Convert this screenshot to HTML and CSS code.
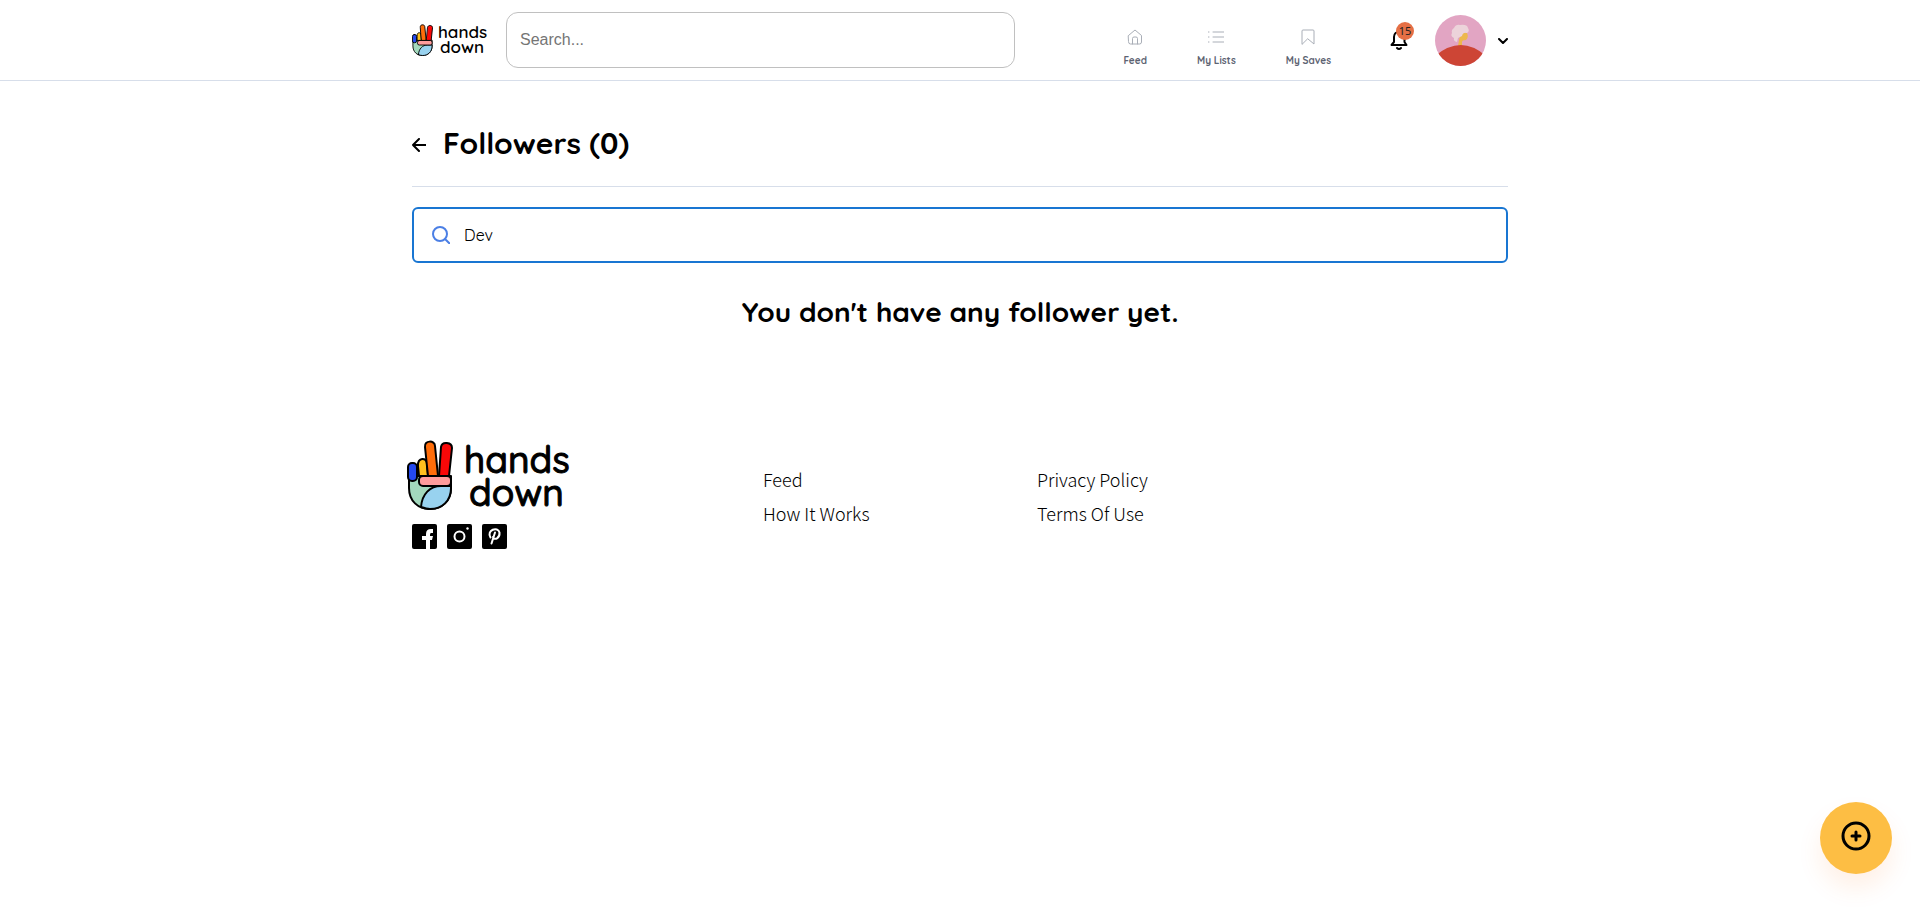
FILE: index.html
```html
<!DOCTYPE html>
<html lang="en">
<head>
<meta charset="utf-8">
<meta name="viewport" content="width=device-width, initial-scale=1">
<title>Followers - hands down</title>
<link rel="stylesheet" href="styles.css">
</head>
<body>
<header class="header">
  <div class="container header-row">
    <a class="brand" href="#">
      <svg class="hand" viewBox="0 0 46 70" aria-hidden="true">
        <g id="hand" stroke="#000" stroke-width="2">
          <path fill="#a3d9bd" d="M2 36V48C2 61 11 69 23 69S44 61 44 48V36Z"/>
          <path fill="#98d2ef" d="M14 67C15 54 23 46 34 46H44V48C44 61 35 69 23 69C20 69 17 68 14 67Z"/>
          <path fill="#ffc01e" d="M11 26C10 17 20 17 20 24L21 36H12Z"/>
          <rect fill="#2449ef" x="1" y="23" width="9" height="18" rx="4"/>
          <path fill="#ff6d0a" d="M18 7C17 0 28 0 28 6L31 36H21Z"/>
          <path fill="#f90808" d="M34 7C35 1 45 2 45 8L42 36H32Z"/>
          <rect fill="#ff9c9c" x="12" y="36" width="32" height="10" rx="4"/>
        </g>
      </svg>
      <span class="wordmark"><span>hands</span><span class="word-down">down</span></span>
    </a>
    <input class="site-search" type="search" placeholder="Search..." aria-label="Search">
    <nav class="nav" aria-label="Main">
      <a class="nav-link" href="#"><svg class="nav-icon" viewBox="0 0 16 16"><path d="M1.500 6.500 8 1l6.500 5.500V13q0 2-2 2h-9q-2 0-2-2ZM5.500 15V9.500Q5.500 8 7 8h2q1.500 0 1.500 1.500V15"/></svg>Feed</a>
      <a class="nav-link" href="#"><svg class="nav-icon" viewBox="0 0 16 16"><path d="M5 3h11M5 8h11M5 13h11M0 3h1M0 8h1M0 13h1"/></svg>My Lists</a>
      <a class="nav-link" href="#"><svg class="nav-icon" viewBox="0 0 16 16"><path d="M2 15V2q0-1 1-1h10q1 0 1 1v13l-6-5Z"/></svg>My Saves</a>
    </nav>
    <div class="account">
      <button class="bell" type="button" aria-label="Notifications">
        <svg class="bell-icon" viewBox="0 0 18 20"><path d="M1.500 15H16.500L14.500 12V7C14.500 0 4 0 4 7V12ZM7 18q2 2 4 0"/></svg>
        <span class="badge">15</span>
      </button>
      <button class="profile" type="button" aria-label="Account menu">
        <svg class="avatar" viewBox="0 0 51 51">
          <defs><clipPath id="round"><circle cx="25.500" cy="25.500" r="25.500"/></clipPath></defs>
          <g clip-path="url(#round)">
            <path fill="#e2a5c3" d="M0 0h51v51H0z"/>
            <path fill="#edb84c" d="M26 18h6q2 4-1 7q-4 0-4 2v4h-4l1-6Z"/>
            <path fill="#ecd3da" d="M19 13q2-4 6-3q7-1 8 3q2 3-1 5q-4-1-5 3l-4 2l-1 4q-4-1-3-4q-4-2-2-5q-1-3 2-5Z"/>
            <path fill="#cd4535" d="M0 41Q26 19 51 41V51H0Z"/>
          </g>
        </svg>
        <svg class="chevron" viewBox="0 0 10 6"><path d="M1 1l4 4 4-4"/></svg>
      </button>
    </div>
  </div>
</header>
<main class="container">
  <div class="title-row">
    <a class="back" href="#" aria-label="Back"><svg class="back-icon" viewBox="0 0 14 14"><path d="M13.500 7H1M7 1 1 7l6 6"/></svg></a>
    <h1 class="title">Followers (0)</h1>
  </div>
  <label class="filter">
    <svg class="filter-icon" viewBox="0 0 18 18"><circle cx="8" cy="8" r="7"/><path d="m13 13 4.500 4.500"/></svg>
    <input class="filter-input" type="text" value="Dev" aria-label="Search followers">
  </label>
  <h2 class="message">You don't have any follower yet.</h2>
</main>
<footer class="container footer">
  <div>
    <a class="brand brand-large" href="#">
      <svg class="hand" viewBox="0 0 46 70" aria-hidden="true"><use href="#hand"/></svg>
      <span class="wordmark"><span>hands</span><span class="word-down">down</span></span>
    </a>
    <div class="social">
      <a href="#" aria-label="Facebook"><svg class="social-icon" viewBox="0 0 25 25"><rect width="25" height="25" rx="2"/><path class="mark" d="M14 25V16h-4v-4h4V10q0-5 5-5h2v4h-2q-1 0-1 2v1h3l-1 4h-2v9Z"/></svg></a>
      <a href="#" aria-label="Instagram"><svg class="social-icon" viewBox="0 0 25 25"><rect width="25" height="25" rx="2"/><circle class="ring" cx="12.500" cy="12.500" r="5"/><circle class="mark" cx="20.500" cy="4.500" r="1.200"/></svg></a>
      <a href="#" aria-label="Pinterest"><svg class="social-icon" viewBox="0 0 25 25"><rect width="25" height="25" rx="2"/><path class="ring" d="M8.500 13.500C4 6 16 2 17.500 8.500C18 14 12.500 17 11 13M13 8.500 9.500 19.500"/></svg></a>
    </div>
  </div>
  <nav class="footer-links" aria-label="Site"><a href="#">Feed</a><a href="#">How It Works</a></nav>
  <nav class="footer-links" aria-label="Legal"><a href="#">Privacy Policy</a><a href="#">Terms Of Use</a></nav>
</footer>
<button class="fab" type="button" aria-label="Add"><svg class="fab-icon" viewBox="0 0 30 30"><circle cx="15" cy="15" r="13"/><path d="M15 11v8M11 15h8"/></svg></button>
</body>
</html>
```
FILE: styles.css
```css
* { box-sizing: border-box; }
body { margin: 0; background: #fff; color: #000; font-family: Quicksand, Lato, sans-serif; }
svg { display: block; flex: none; fill: none; stroke-linecap: round; stroke-linejoin: round; }
a { color: inherit; text-decoration: none; }
button { border: 0; padding: 0; background: none; color: inherit; font: inherit; cursor: pointer; }
.container { width: 100%; max-width: 1128px; margin: 0 auto; padding: 0 16px; }

.brand { display: flex; gap: 5px; width: 75px; }
.hand { width: 21px; height: 32px; }
.wordmark { display: flex; flex-direction: column; font-size: 17px; font-weight: 600; line-height: 15px; }
.word-down { padding-left: 2px; }
.brand-large { gap: 11px; width: 162px; height: 70px; margin-left: -5px; }
.brand-large .hand { width: 46px; height: 70px; }
.brand-large .wordmark { padding-top: 3px; font-size: 37px; font-weight: 500; line-height: 33px; -webkit-text-stroke: 1px #000; }
.brand-large .word-down { padding-left: 5px; }

.header { border-bottom: 1px solid #d7deea; }
.header-row { display: flex; align-items: center; height: 80px; }
.site-search { flex: 0 1 509px; min-width: 0; height: 56px; margin-left: 19px; padding: 0 13px; border: 1px solid #c0c0c0; border-radius: 12px; outline: 0; background: #fff; color: #333; font: 16px "Liberation Sans", Arial, sans-serif; }
.site-search::placeholder { color: #757575; opacity: 1; }
.nav { display: flex; gap: 50px; margin-left: auto; padding-top: 17px; }
.nav-link { display: flex; flex-direction: column; align-items: center; gap: 9px; color: #5d6372; font-size: 10px; font-weight: 700; line-height: 14px; white-space: nowrap; }
.nav-icon { width: 16px; height: 16px; stroke: #a9aeb7; }
.account { display: flex; align-items: center; gap: 27px; margin-left: 59px; }
.bell { position: relative; }
.bell-icon { width: 18px; height: 20px; stroke: #000; stroke-width: 2; }
.badge { position: absolute; top: -8px; left: 6px; width: 18px; height: 18px; border-radius: 50%; background: #e56f45; color: #222; font: 11px/18px "Noto Sans", sans-serif; text-align: center; }
.profile { display: flex; align-items: center; gap: 12px; }
.avatar { width: 51px; height: 51px; }
.chevron { width: 10px; height: 6px; margin-top: 2px; stroke: #000; stroke-width: 2; }

.title-row { display: flex; align-items: center; gap: 17px; height: 106px; border-bottom: 1px solid #d7deea; }
.back-icon { width: 14px; height: 14px; stroke: #000; stroke-width: 2; }
.back { padding-top: 22px; }
.title { margin: 0; padding-top: 18px; font-size: 30px; font-weight: 700; line-height: 40px; }
.filter { display: flex; align-items: center; gap: 14px; height: 56px; margin-top: 20px; padding: 0 18px; border: 2px solid #1976d2; border-radius: 6px; }
.filter-icon { width: 18px; height: 18px; stroke: #4b7fe5; stroke-width: 2; }
.filter-input { flex: 1; min-width: 0; border: 0; padding: 0; outline: 0; background: none; color: #000; font: 400 16px Quicksand, Lato, sans-serif; }
.message { margin: 29px 0 0; font-size: 28px; font-weight: 700; line-height: 40px; text-align: center; }

.footer { display: grid; grid-template-columns: 351fr 274fr 471fr; margin-top: 108px; }
.social { display: flex; gap: 10px; margin-top: 14px; }
.social-icon { width: 25px; height: 25px; fill: #000; }
.mark { fill: #fff; }
.ring { fill: none; stroke: #fff; stroke-width: 2; }
.footer-links { display: flex; flex-direction: column; align-items: flex-start; padding-top: 22px; font: 300 18px/34px "Noto Sans CJK JP", sans-serif; }

.fab { position: fixed; right: 28px; bottom: 50px; display: grid; place-items: center; width: 72px; height: 72px; padding-bottom: 4px; border-radius: 50%; background: #fdbe44; box-shadow: 0 14px 24px #ff6d0a1a; }
.fab-icon { width: 30px; height: 30px; stroke: #000; stroke-width: 3; }
```
